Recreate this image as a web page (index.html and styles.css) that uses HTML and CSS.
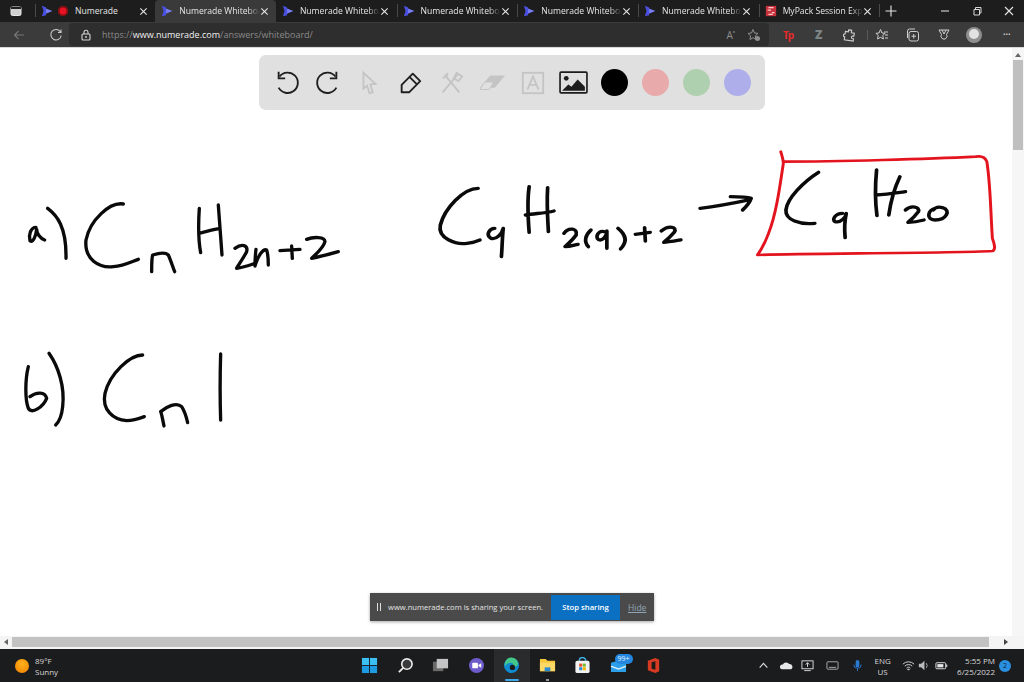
FILE: index.html
```html
<!DOCTYPE html>
<html lang="en">
<head>
<meta charset="utf-8">
<title>Numerade Whiteboard</title>
<link rel="stylesheet" href="styles.css">
</head>
<body>
<svg class="defs" width="0" height="0" aria-hidden="true">
  <symbol id="numerade" viewBox="0 0 14 14"><path d="M1 1L6 3V5L13 7L6 10V12L1 13L3 7Z" fill="#4a50e0"/><path d="M6 4L13 7L6 10Z" fill="#7a7ff0"/></symbol>
  <symbol id="close" viewBox="0 0 10 10"><path d="M1.5 1.5L8.5 8.5M8.5 1.5L1.5 8.5" stroke="#e6e6e6" stroke-width="1.2" fill="none"/></symbol>
</svg>
<div class="window">
  <div class="tabstrip">
    <div class="tabstrip-start"><svg class="icon-14" viewBox="0 0 14 14"><rect x="2" y="2.500" width="10" height="9" rx="1.500" fill="#cfcfcf" stroke="#e6e6e6"/><rect x="2" y="2.500" width="10" height="2.500" fill="#222"/></svg></div>
    <div class="tab sep"><svg class="fav"><use href="#numerade"/></svg><span class="rec"></span><span class="tab-title first">Numerade</span><svg class="x"><use href="#close"/></svg></div>
    <div class="tab active"><svg class="fav"><use href="#numerade"/></svg><span class="tab-title">Numerade Whiteboa</span><svg class="x"><use href="#close"/></svg></div>
    <div class="tab"><svg class="fav"><use href="#numerade"/></svg><span class="tab-title">Numerade Whiteboa</span><svg class="x"><use href="#close"/></svg></div>
    <div class="tab sep"><svg class="fav"><use href="#numerade"/></svg><span class="tab-title">Numerade Whiteboa</span><svg class="x"><use href="#close"/></svg></div>
    <div class="tab sep"><svg class="fav"><use href="#numerade"/></svg><span class="tab-title">Numerade Whiteboa</span><svg class="x"><use href="#close"/></svg></div>
    <div class="tab sep"><svg class="fav"><use href="#numerade"/></svg><span class="tab-title">Numerade Whiteboa</span><svg class="x"><use href="#close"/></svg></div>
    <div class="tab sep"><svg class="fav" viewBox="0 0 14 14"><rect x="1" y="1" width="12" height="12" fill="#c8323c"/><path d="M4 3H10M3 6H7M8 9H11M4 11H9" stroke="#f3c9c9" stroke-width="1.4"/></svg><span class="tab-title">MyPack Session Exp</span><svg class="x"><use href="#close"/></svg></div>
    <div class="newtab sep"><svg class="icon-14" viewBox="0 0 14 14"><path d="M7 1.5V12.5M1.5 7H12.5" stroke="#e6e6e6" stroke-width="1.1"/></svg></div>
    <div class="winctl">
      <svg class="icon-10" viewBox="0 0 10 10"><path d="M1 5H9" stroke="#d8d8d8" stroke-width="1.1"/></svg>
      <svg class="icon-10" viewBox="0 0 10 10"><path d="M2 3.5H7.5V9H2ZM3.5 3.5V1.5H9V7H7.5" stroke="#d8d8d8" fill="none"/></svg>
      <svg class="icon-10" viewBox="0 0 10 10"><path d="M1 1L9 9M9 1L1 9" stroke="#e6e6e6" stroke-width="1.1"/></svg>
    </div>
  </div>
  <div class="addressbar">
    <div class="nav">
      <svg class="icon-14" viewBox="0 0 14 14"><path d="M12 7H2.5M6.5 3L2.5 7L6.5 11" stroke="#777" stroke-width="1.1" fill="none"/></svg>
      <svg class="icon-14" viewBox="0 0 14 14"><path d="M11.5 4A5.2 5.2 0 1 0 12.2 7.5M12 1.5V4.5H9" stroke="#c8c8c8" stroke-width="1.1" fill="none"/></svg>
    </div>
    <div class="urlfield">
      <svg class="icon-12 lock" viewBox="0 0 12 12"><rect x="2" y="5" width="8" height="6" rx="1" fill="none" stroke="#d5d5d5" stroke-width="1.1"/><path d="M4 5V3.2A2 2 0 0 1 8 3.2V5" fill="none" stroke="#d5d5d5" stroke-width="1.1"/><circle cx="6" cy="8" r=".9" fill="#d5d5d5"/></svg>
      <span class="url"><span class="dim">https://</span>www.numerade.com<span class="dim">/answers/whiteboard/</span></span>
      <span class="read-aloud">A<sup>&#x1d43;</sup></span>
      <svg class="icon-14 fav-star" viewBox="0 0 14 14"><path d="M6 1.5L7.5 5L11 5.4L8.4 7.8L9 11.5L6 9.7L3 11.5L3.6 7.8L1 5.4L4.5 5Z" fill="none" stroke="#8f8f8f"/><circle cx="10.5" cy="10.5" r="2.5" fill="#8f8f8f"/></svg>
    </div>
    <div class="ext">
      <span class="tp">Tp</span>
      <span class="zz">Z</span>
      <svg class="icon-14" viewBox="0 0 14 14"><path d="M6 2H9V4.5H12V7.5H10.5A1.4 1.4 0 0 0 10.5 10H12V12.5H3V9.5A1.5 1.5 0 0 1 3 6.5V4H6Z" transform="rotate(8 7 7)" fill="none" stroke="#cfcfcf" stroke-width="1.1"/></svg>
      <span class="ext-sep"></span>
      <svg class="icon-14" viewBox="0 0 14 14"><path d="M5.5 1.5L7 5L10 5.3L7.8 7.5L8.4 11L5.5 9.3L2.6 11L3.2 7.5L1 5.3L4 5Z" fill="none" stroke="#cfcfcf"/><path d="M9 4H13M10 7H13M10 10H13" stroke="#cfcfcf"/></svg>
      <svg class="icon-14" viewBox="0 0 14 14"><rect x="3" y="3.5" width="9.5" height="9.5" rx="2" fill="none" stroke="#cfcfcf"/><path d="M1.5 10V3A2 2 0 0 1 3.5 1H9M7.7 6V10.5M5.5 8.2H10" fill="none" stroke="#cfcfcf"/></svg>
      <svg class="icon-14" viewBox="0 0 14 14"><path d="M2 2H12L9.5 6.5A3 3 0 1 1 4.5 6.5ZM5 2L7 6L9 2" fill="none" stroke="#cfcfcf"/></svg>
      <span class="avatar"><span class="avatar-head"></span></span>
      <span class="more">&#8226;&#8226;&#8226;</span>
    </div>
  </div>
  <div class="viewport">
    <main class="canvas">
      <svg class="ink" viewBox="0 48 1012 590" width="1012" height="590">
        <g class="stroke black" transform="translate(10 190) scale(.3333)">
          <path d="M78 112C62 112 55 135 60 152C70 160 78 135 80 118C80 130 90 145 104 150"/>
          <path d="M113 55C140 75 170 110 168 205"/>
          <path d="M340 42C300 35 240 90 228 150C222 210 270 235 310 230C340 228 365 215 385 208"/>
          <path d="M425 245C425 220 425 205 428 195C445 190 465 185 475 195C482 210 488 230 494 245"/>
          <path d="M568 55C565 100 565 150 572 188M625 45C628 90 633 150 636 195M568 130C590 125 610 118 630 115"/>
          <path d="M675 175C695 160 715 165 710 185C700 205 685 225 680 235C700 232 720 225 735 220"/>
          <path d="M738 178C736 195 735 210 735 228C745 195 760 175 770 180C775 195 775 210 775 225"/>
          <path d="M810 182L870 178M845 168L847 205"/>
          <path d="M890 148C910 140 945 140 945 155C940 175 915 195 905 205C930 200 960 192 985 185"/>
          <path d="M55 530C45 570 45 630 55 655C65 675 100 650 110 625C105 605 80 605 60 620"/>
          <path d="M117 490C145 530 165 590 158 650C155 680 148 695 137 705"/>
          <path d="M398 495C360 495 300 550 285 610C275 660 310 690 350 692C370 692 390 685 403 680"/>
          <path d="M462 708C458 690 455 670 452 665C470 650 500 635 515 650C525 665 530 685 533 698"/>
          <path d="M632 492C630 560 630 630 632 690"/>
        </g>
        <g class="stroke black" transform="translate(430 145) scale(.37 .3333)">
          <path d="M130 130C90 130 40 190 28 240C20 280 70 300 100 295C115 293 125 290 135 285"/>
          <path d="M175 250C160 250 150 270 165 280C180 285 195 265 198 250C195 280 195 310 193 335"/>
          <path d="M268 125C262 170 265 220 268 262M318 128C315 180 318 220 320 260M258 210C285 205 310 205 335 198"/>
          <path d="M362 265C375 245 400 250 395 270C385 285 375 295 365 305C380 305 390 300 400 298"/>
          <path d="M435 255C420 270 415 290 428 305"/>
          <path d="M470 260C450 255 445 285 460 285C470 285 478 270 478 258C478 275 478 295 478 310"/>
          <path d="M508 250C530 270 535 290 515 312"/>
          <path d="M555 268L595 262M580 248L582 288"/>
          <path d="M625 258C645 240 670 245 660 262C650 275 640 285 632 292C650 290 665 288 678 285"/>
          <path d="M730 190C770 185 820 175 862 165M812 155C830 155 855 155 868 160C865 170 855 185 845 195"/>
          <path d="M1050 82C1010 110 965 160 962 195C960 225 1000 240 1040 235"/>
          <path d="M1115 205C1095 205 1085 225 1095 230C1110 235 1125 215 1125 205C1120 230 1120 255 1122 278"/>
          <path d="M1207 75C1203 120 1203 170 1208 212M1270 95C1255 130 1245 170 1240 210M1205 150C1230 148 1250 145 1285 140"/>
          <path d="M1285 195C1300 180 1325 185 1320 200C1310 215 1300 225 1292 232C1310 232 1325 228 1335 225"/>
          <path d="M1365 190C1345 195 1340 225 1365 225C1395 225 1410 195 1385 188C1375 185 1365 188 1360 195"/>
        </g>
        <g class="stroke red" transform="translate(430 145) scale(.37 .3333)">
          <path d="M948 20C952 35 955 45 955 55C945 130 935 210 915 265C905 295 895 315 885 330C1000 325 1400 325 1520 318C1530 315 1525 295 1520 280C1515 200 1515 120 1505 50C1500 35 1490 32 1475 35C1350 42 1100 50 955 50"/>
        </g>
      </svg>
      <div class="toolbar">
        <span class="tool"><svg viewBox="0 0 28 28"><path d="M6 7A11 11 0 1 1 5 19" class="t-dark"/><path d="M5 2V9H12" class="t-dark"/></svg></span>
        <span class="tool"><svg viewBox="0 0 28 28"><path d="M22 7A11 11 0 1 0 23 19" class="t-dark"/><path d="M23 2V9H16" class="t-dark"/></svg></span>
        <span class="tool"><svg viewBox="0 0 28 28"><path d="M8 3L21 15L15.500 15.500L18 24L14.500 25L12 17L8 20Z" class="t-faint"/></svg></span>
        <span class="tool"><svg viewBox="0 0 28 28"><path d="M17 4L25 12L13 24H5V16ZM14 8L21 15" class="t-dark" stroke-linejoin="round"/></svg></span>
        <span class="tool"><svg viewBox="0 0 28 28"><path d="M7 5L23 24M21 5L5 24M5 8A4 4 0 0 0 10 3M17 9L20 3L26 7L22 12Z" class="t-faint"/></svg></span>
        <span class="tool"><svg viewBox="0 0 28 28"><path d="M12 6H28L17 19H1Z" fill="#c4c4c4"/><path d="M6 13H16L11 21H1Z" fill="#e0e0e0" stroke="#c4c4c4"/></svg></span>
        <span class="tool"><svg viewBox="0 0 28 28"><rect x="3" y="3" width="22" height="22" class="t-faint"/><path d="M8 21L14 7L20 21M10 16H18" class="t-faint"/></svg></span>
        <span class="tool"><svg class="img-icon" viewBox="0 0 28 22"><rect x="1" y="1" width="26" height="20" rx="1" fill="#e0e0e0" stroke="#1d1d1d" stroke-width="1.600"/><circle cx="7" cy="7" r="2.300" fill="#1d1d1d"/><path d="M3 19L9 13L12 15L18 8L25 15V19Z" fill="#1d1d1d"/></svg></span>
        <span class="tool"><span class="dot c-black"></span></span>
        <span class="tool"><span class="dot c-pink"></span></span>
        <span class="tool"><span class="dot c-green"></span></span>
        <span class="tool"><span class="dot c-blue"></span></span>
      </div>
      <div class="sharebar">
        <span class="pause"></span>
        <span class="share-text">www.numerade.com is sharing your screen.</span>
        <span class="stop">Stop sharing</span>
        <span class="hide">Hide</span>
      </div>
    </main>
    <div class="vscroll">
      <svg class="arrow" viewBox="0 0 8 8"><path d="M4 2L7 6H1Z" fill="#666"/></svg>
      <div class="vthumb"></div>
    </div>
  </div>
  <div class="hscroll">
    <svg class="arrow" viewBox="0 0 8 8"><path d="M2 4L6 1V7Z" fill="#666"/></svg>
    <div class="hthumb"></div>
    <svg class="arrow" viewBox="0 0 8 8"><path d="M6 4L2 1V7Z" fill="#444"/></svg>
  </div>
  <footer class="taskbar">
    <div class="weather">
      <span class="sun"></span>
      <div class="weather-text"><span>89°F</span><span>Sunny</span></div>
    </div>
    <div class="apps">
      <span class="app"><svg viewBox="0 0 18 18"><g fill="#3cc0f4"><rect x="1" y="1" width="7.500" height="7.500"/><rect x="9.500" y="1" width="7.500" height="7.500"/></g><g fill="#1c9be0"><rect x="1" y="9.500" width="7.500" height="7.500"/><rect x="9.500" y="9.500" width="7.500" height="7.500"/></g></svg></span>
      <span class="app"><svg viewBox="0 0 18 18"><circle cx="10.500" cy="7.500" r="5.500" fill="#3a3a3a" stroke="#ececec" stroke-width="1.700"/><path d="M6.500 11.500L2 16" stroke="#ececec" stroke-width="2"/></svg></span>
      <span class="app"><svg viewBox="0 0 18 18"><rect x="1" y="5" width="11" height="10" fill="#6a6a6a"/><rect x="5" y="2" width="12" height="10" fill="#c4c4c4"/></svg></span>
      <span class="app"><svg viewBox="0 0 18 18"><circle cx="9" cy="9" r="8" fill="#6d5bc9"/><rect x="4.500" y="6" width="6" height="6" rx="1" fill="#fff"/><path d="M11 8.500L14 6.500V11.500L11 9.500Z" fill="#fff"/></svg></span>
      <span class="app app-on"><svg viewBox="0 0 18 18"><circle cx="9" cy="9" r="8" fill="#0f8bd2"/><path d="M2 8A7 7 0 0 1 16 7C16 10 13 11 10 10.500C12 9 11 6 8 6C5 6 3 8 2 10Z" fill="#43c88a"/><circle cx="10" cy="11" r="2.800" fill="#1c1c1c"/></svg><span class="underline"></span></span>
      <span class="app"><svg viewBox="0 0 18 18"><path d="M1 2H7L9 4H17V15H1Z" fill="#f8c83c"/><rect x="1" y="6" width="16" height="9" fill="#fcd866"/><rect x="6" y="11" width="6" height="4" fill="#2a8ad4"/></svg><span class="pip"></span></span>
      <span class="app"><svg viewBox="0 0 18 18"><path d="M5.500 4A3.500 3.500 0 0 1 12.500 4" fill="none" stroke="#3db4ea" stroke-width="1.500"/><rect x="1.500" y="4" width="15" height="13" rx="2" fill="#f2f2f2"/><rect x="5.500" y="7" width="3.200" height="3.200" fill="#e8502a"/><rect x="9.300" y="7" width="3.200" height="3.200" fill="#7bb92c"/><rect x="5.500" y="10.800" width="3.200" height="3.200" fill="#2a8ad4"/><rect x="9.300" y="10.800" width="3.200" height="3.200" fill="#f4b400"/></svg></span>
      <span class="app"><svg viewBox="0 0 18 18"><path d="M1 6L12 3L17 7V16H1Z" fill="#2b9fe8"/><path d="M1 9L9 12L17 9V10.500L9 13.500L1 10.500Z" fill="#d8eefa"/></svg><span class="badge">99+</span></span>
      <span class="app"><svg viewBox="0 0 18 18"><path d="M3 4L11 1L15 3V15L11 17L3 14Z" fill="#d83b22"/><path d="M7 5.500L11 4.500V13.500L7 12.500Z" fill="#1c1c1c"/></svg></span>
    </div>
    <div class="tray">
      <svg class="tray-i caret" viewBox="0 0 10 10"><path d="M1.500 7L5 3L8.500 7" stroke="#ddd" fill="none"/></svg>
      <svg class="tray-i cloud" viewBox="0 0 14 14"><path d="M2 11A2.500 2.500 0 0 1 3 6A4 4 0 0 1 10 5.500A3 3 0 0 1 12 11Z" fill="#e8e8e8"/></svg>
      <svg class="tray-i wide" viewBox="0 0 14 14"><rect x="1" y="2" width="12" height="8.500" fill="none" stroke="#e0e0e0"/><path d="M7 4V8.500M5 6L7 4L9 6M3.500 12.500H10.500" stroke="#e0e0e0" fill="none"/></svg>
      <svg class="tray-i wide" viewBox="0 0 14 14"><rect x="1" y="3" width="12" height="8" rx="1" fill="none" stroke="#b0b0b0"/><path d="M3 9H11" stroke="#b0b0b0"/></svg>
      <svg class="tray-i mic" viewBox="0 0 14 14"><rect x="5" y="1" width="4" height="8" rx="2" fill="#2a7ad0"/><path d="M3 6A4 4 0 0 0 11 6M7 10V13" stroke="#2a7ad0" fill="none"/></svg>
      <div class="lang"><span>ENG</span><span>US</span></div>
      <svg class="tray-i wifi" viewBox="0 0 14 14"><path d="M1 5.500A8.500 8.500 0 0 1 13 5.500M3 7.700A5.500 5.500 0 0 1 11 7.700M5 9.800A2.500 2.500 0 0 1 9 9.800M7 12L6 11H8Z" stroke="#ddd" fill="none"/></svg>
      <svg class="tray-i speaker" viewBox="0 0 14 14"><path d="M2 5H4.500L8 2V12L4.500 9H2Z" fill="#bbb"/><path d="M10 4.500A4 4 0 0 1 10 9.500" stroke="#bbb" fill="none"/></svg>
      <svg class="tray-i battery" viewBox="0 0 14 14"><rect x="1" y="4" width="10.500" height="6.500" rx="1" fill="none" stroke="#e6e6e6"/><rect x="2.500" y="5.500" width="6.500" height="3.500" fill="#e6e6e6"/><rect x="12" y="6" width="1.200" height="2.500" fill="#e6e6e6"/></svg>
      <div class="clock"><span>5:55 PM</span><span>6/25/2022</span></div>
      <span class="notif">2</span>
    </div>
  </footer>
</div>
</body>
</html>
```
FILE: styles.css
```css
* { box-sizing: border-box; }
html, body { margin: 0; padding: 0; }
body { width: 1024px; height: 682px; overflow: hidden; font-family: "Open Sans", "Liberation Sans", sans-serif; background: #fff; }
.defs { position: absolute; }
.window { display: flex; flex-direction: column; width: 1024px; height: 682px; }

.tabstrip { display: flex; align-items: stretch; height: 22px; background: #1d1d1d; color: #e6e6e6; flex: none; }
.tabstrip-start { width: 34.5px; display: flex; align-items: center; padding-left: 9px; flex: none; }
.icon-14 { width: 14px; height: 14px; flex: none; }
.icon-12 { width: 12px; height: 12px; flex: none; }
.icon-10 { width: 10px; height: 10px; flex: none; }
.tab { width: 120.7px; display: flex; align-items: center; padding-left: 6px; position: relative; flex: none; font-size: 8.6px; border-radius: 4px 4px 0 0; }
.tab.active { background: #3a3a3a; }
.tab.sep::before, .newtab.sep::before { content: ""; position: absolute; left: 0; top: 4px; bottom: 5px; width: 1px; background: #4a4a4a; }
.fav { width: 12px; height: 12px; flex: none; }
.rec { width: 10px; height: 10px; border-radius: 50%; background: #e81224; margin-left: 5px; box-shadow: inset 0 0 0 1.5px #7a1010; flex: none; }
.tab-title { margin-left: 6px; width: 80.5px; white-space: nowrap; font-size: 8.6px; line-height: 12px; -webkit-mask-image: linear-gradient(90deg, #000 85%, transparent); mask-image: linear-gradient(90deg, #000 85%, transparent); flex: none; }
.tab-title.first { margin-left: 7.5px; width: 63.5px; -webkit-mask-image: none; mask-image: none; }
.x { width: 9px; height: 9px; flex: none; }
.newtab { position: relative; width: 24px; display: flex; align-items: center; justify-content: center; flex: none; }
.winctl { margin-left: auto; display: flex; align-items: center; gap: 22px; padding-right: 10px; }

.addressbar { display: flex; align-items: center; height: 26px; background: #3b3b3b; flex: none; border-bottom: 1px solid #d8d8d8; }
.nav { width: 69px; display: flex; align-items: center; gap: 23px; padding-left: 12px; flex: none; }
.urlfield { width: 700px; height: 23px; background: #2e2e2e; border-radius: 4px; display: flex; align-items: center; padding-left: 11px; font-size: 9px; color: #f0f0f0; flex: none; }
.lock { margin-right: 10px; }
.url { font-size: 9px; white-space: nowrap; }
.dim { color: #8a8a8a; }
.read-aloud { margin-left: auto; color: #8f8f8f; font-size: 10px; margin-right: 12px; }
.read-aloud sup { font-size: 6px; }
.fav-star { margin-right: 8px; }
.ext { flex: 1; display: flex; align-items: center; gap: 17px; padding-left: 14px; }
.ext > * { flex: none; }
.tp { color: #e82a2a; font-size: 10px; font-weight: 700; letter-spacing: -1px; width: 12px; }
.zz { color: #7d8486; font-size: 12px; font-weight: 800; width: 10px; margin-left: 3px; }
.ext-sep { width: 1px; height: 10px; background: #5a5a5a; margin: 0 -10px 0 -6px; }
.avatar { width: 16px; height: 16px; border-radius: 50%; background: #8f8f8f; overflow: hidden; display: flex; justify-content: center; margin-left: -2px; }
.avatar-head { width: 10px; height: 10px; margin-top: 2px; border-radius: 50%; background: #e2e2e2; }
.more { color: #ccc; font-size: 6.500px; margin-left: 4px; }

.viewport { flex: 1; display: flex; min-height: 0; }
.canvas { position: relative; flex: 1; background: #fff; }
.ink { position: absolute; left: 0; top: 0; display: block; }
.stroke path { fill: none; stroke-linecap: round; stroke-linejoin: round; }
.stroke.black path { stroke: #0a0a0a; stroke-width: 10px; }
.stroke.red path { stroke: #e4141e; stroke-width: 8px; }

.toolbar { position: absolute; left: 259px; top: 7px; width: 506px; height: 55px; background: #e0e0e0; border-radius: 7px; display: flex; align-items: center; padding-left: 7px; }
.tool { width: 41px; height: 41px; display: flex; align-items: center; justify-content: center; flex: none; }
.tool svg { width: 26px; height: 26px; }
.tool svg.img-icon { width: 29px; height: 23px; }
.t-dark { fill: none; stroke: #1f1f1f; stroke-width: 2px; }
.t-faint { fill: none; stroke: #c4c4c4; stroke-width: 2px; }
.dot { width: 27px; height: 27px; border-radius: 50%; display: block; }
.c-black { background: #000; }
.c-pink { background: #e8aaaa; }
.c-green { background: #aed0ae; }
.c-blue { background: #aeaeea; }

.sharebar { position: absolute; left: 370px; top: 545px; width: 284px; height: 28px; background: #4a4a4a; color: #e4e4e4; display: flex; align-items: center; box-shadow: 0 1px 3px rgba(0,0,0,.35); }
.pause { width: 4px; height: 8px; margin-left: 7px; border-left: 1px solid #ddd; border-right: 1px solid #ddd; flex: none; }
.share-text { margin-left: 7px; font-size: 7.6px; white-space: nowrap; width: 163px; flex: none; }
.stop { width: 69px; height: 25px; background: #0b6fc2; color: #fff; font-size: 7.7px; font-weight: 600; display: flex; align-items: center; justify-content: center; flex: none; }
.hide { margin-left: 8px; color: #8fa4b4; font-size: 8.500px; text-decoration: underline; }

.vscroll { width: 12px; background: #f6f6f6; display: flex; flex-direction: column; align-items: center; flex: none; padding-top: 3px; }
.vscroll .arrow { width: 8px; height: 8px; flex: none; }
.vthumb { width: 10px; height: 90px; margin-top: 1px; background: #bfbfbf; flex: none; }
.hscroll { height: 13px; background: #f4f4f4; display: flex; align-items: center; flex: none; gap: 2px; padding: 0 14px 2px 2px; }
.hscroll .arrow { width: 8px; height: 8px; flex: none; }
.hthumb { flex: 1; height: 10px; background: #c2c2c2; margin-right: 11px; }

.taskbar { height: 33px; background: #1b1c1e; color: #e8e8e8; display: flex; align-items: center; flex: none; }
.weather { width: 352px; display: flex; align-items: center; padding-left: 15px; gap: 6px; flex: none; }
.sun { width: 14px; height: 14px; border-radius: 50%; background: radial-gradient(circle at 50% 35%, #ffb21c, #ef7f00); }
.weather-text { display: flex; flex-direction: column; font-size: 8px; line-height: 11px; color: #d8d8d8; }
.apps { display: flex; align-items: center; flex: none; }
.app { position: relative; width: 35.500px; height: 33px; display: flex; align-items: center; justify-content: center; flex: none; }
.app svg { width: 17px; height: 17px; }
.app-on { background: #2a2b2d; }
.underline { position: absolute; left: 11px; right: 11px; bottom: 1px; height: 2px; background: #3ea8e8; border-radius: 1px; }
.pip { position: absolute; left: 16px; right: 16px; bottom: 1px; height: 2px; background: #9a9a9a; }
.badge { position: absolute; left: 14px; top: 5px; background: #2488e0; color: #e8f4ff; font-size: 7px; line-height: 10px; padding: 0 3px; border-radius: 6px; }
.tray { margin-left: auto; display: flex; align-items: center; padding-right: 13px; }
.tray-i { width: 13px; height: 13px; flex: none; }
.tray-i.caret { width: 11px; }
.tray-i.cloud { margin-left: 11px; }
.tray-i.wide { margin-left: 8px; }
.tray-i.wide + .tray-i.wide { margin-left: 12px; }
.tray-i.mic { margin-left: 12px; }
.tray-i.wifi { margin-left: 10px; }
.tray-i.speaker { margin-left: 2px; }
.tray-i.battery { margin-left: 5px; }
.lang { display: flex; flex-direction: column; align-items: center; width: 18px; font-size: 8px; line-height: 11px; color: #d8d8d8; margin-left: 9.500px; }
.clock { display: flex; flex-direction: column; align-items: flex-end; font-size: 8px; line-height: 11px; color: #d8d8d8; margin-left: 9.500px; }
.notif { width: 12px; height: 12px; border-radius: 50%; background: #2a8fe0; color: #10243a; font-size: 7px; line-height: 12px; text-align: center; margin-left: 4px; }
```
